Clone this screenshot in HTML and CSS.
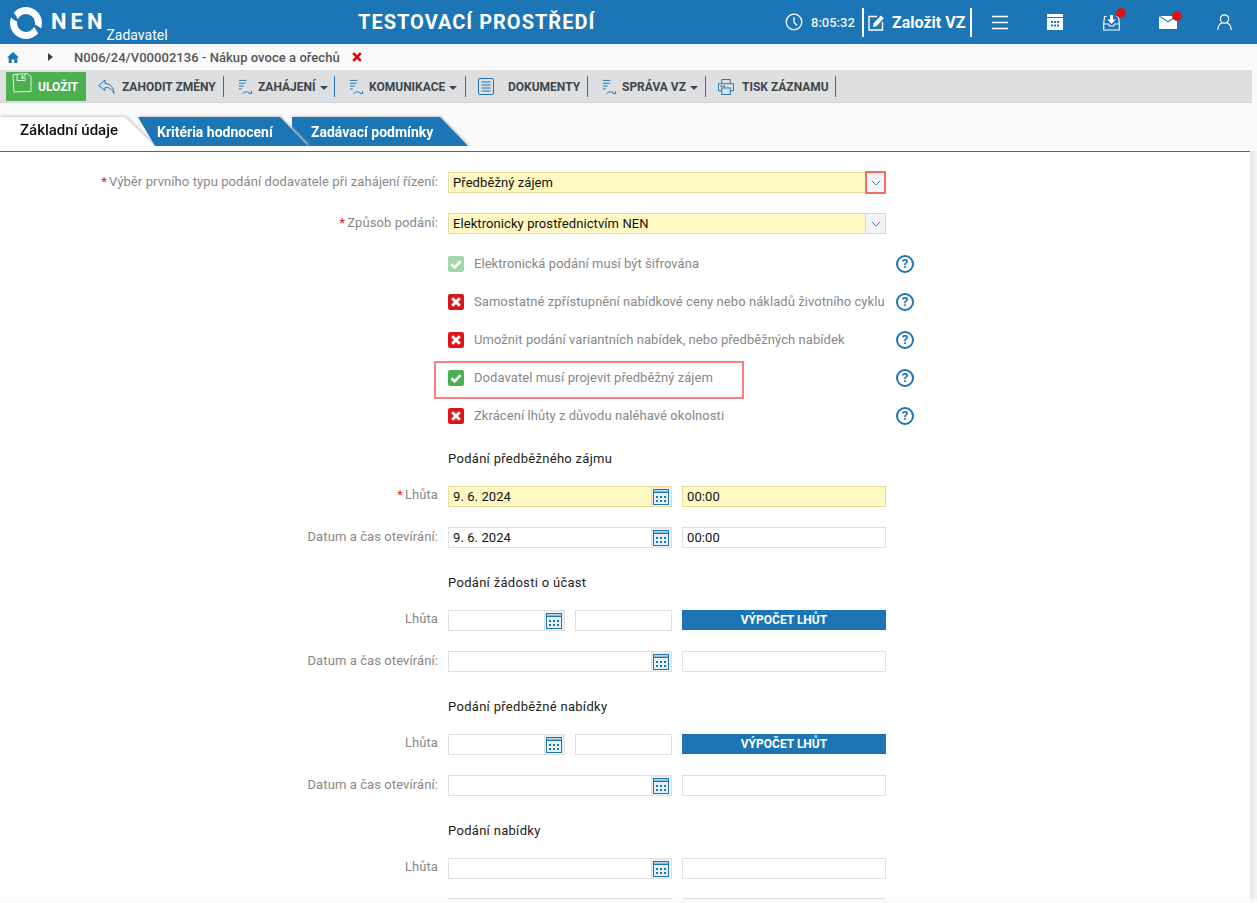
FILE: index.html
```html
<!DOCTYPE html>
<html lang="cs">
<head>
<meta charset="utf-8">
<title>NEN Zadavatel</title>
<link rel="stylesheet" href="styles.css">
</head>
<body>
<svg class="defs" width="0" height="0" aria-hidden="true">
  <defs>
    <symbol id="cal" viewBox="0 0 16 16">
      <rect x="0.5" y="0.5" width="15" height="15" fill="#e6f0f8" stroke="#1c75b5"/>
      <rect x="0" y="0" width="16" height="4" fill="#1c75b5"/>
      <rect x="1" y="1.3" width="14" height="1.2" fill="#fff"/>
      <g fill="#1c75b5">
        <rect x="3" y="7" width="2" height="2"/><rect x="7" y="7" width="2" height="2"/><rect x="11" y="7" width="2" height="2"/>
        <rect x="3" y="11" width="2" height="2"/><rect x="7" y="11" width="2" height="2"/><rect x="11" y="11" width="2" height="2"/>
      </g>
    </symbol>
    <symbol id="chev" viewBox="0 0 10 6">
      <path d="M0.7 0.7 L5 5 L9.3 0.7" fill="none" stroke="#3d8bc4" stroke-width="1"/>
    </symbol>
    <symbol id="lines" viewBox="0 0 16 18">
      <path d="M1 2.5H9M1 5.5H8M1 8.5H6M1 11.500H4" fill="none" stroke="#1c75b5" stroke-width="1"/>
      <path d="M5 17C6 14.500 10 14 12.500 15.800M14.500 13.800V16.500H11.500" fill="none" stroke="#1c75b5" stroke-width="1"/>
    </symbol>
    <symbol id="ok" viewBox="0 0 16 16">
      <path d="M3.4 8.3L6.6 11.4L12.6 5.2" fill="none" stroke="#fff" stroke-width="2.6"/>
    </symbol>
    <symbol id="no" viewBox="0 0 16 16">
      <path d="M4.2 4.2L11.8 11.8M11.8 4.2L4.2 11.8" fill="none" stroke="#fff" stroke-width="3"/>
    </symbol>
  </defs>
</svg>

<header class="top">
  <div class="brand">
    <svg class="logo" viewBox="0 0 32 32" width="32" height="32">
      <path d="M3.740 5.700A16 16 0 0 1 31 21.500Q28 18.500 24.860 17.560A9 9 0 0 0 7.840 12.200Q6 8.500 3.740 5.700Z" fill="#fff"/>
      <path d="M3.740 5.700A16 16 0 0 1 31 21.500Q28 18.500 24.860 17.560A9 9 0 0 0 7.840 12.200Q6 8.500 3.740 5.700Z" fill="#fff" transform="rotate(180 16 16)"/>
    </svg>
    <span class="nen">NEN</span>
    <span class="role">Zadavatel</span>
  </div>
  <div class="title">TESTOVACÍ PROSTŘEDÍ</div>
  <div class="status">
    <svg class="i-clock" viewBox="0 0 18 18" width="18" height="18"><circle cx="9" cy="9" r="7.8" fill="none" stroke="#fff" stroke-width="1.3"/><path d="M9 4V9.300L12 12.500" fill="none" stroke="#fff" stroke-width="1.3"/></svg>
    <span class="clock">8:05:32</span>
    <div class="create">
      <svg viewBox="0 0 17 17" width="17" height="17"><path d="M9 2.500H1V16H14.500V8" fill="none" stroke="#fff" stroke-width="1.400"/><path d="M5.500 9.500L12.800 1.500L15.800 4.300L8.500 12.300L5 13Z" fill="#fff"/></svg>
      <span>Založit VZ</span>
    </div>
    <div class="tool t-menu">
      <svg viewBox="0 0 16 15" width="16" height="15"><path d="M0 1.500H16M0 7.500H16M0 13.500H16" stroke="#fff" stroke-width="1.500"/></svg>
    </div>
    <div class="tool t-cal">
      <svg viewBox="0 0 16 16" width="16" height="16"><path d="M0 0H16V16H0Z" fill="#fff"/><rect x="0" y="3" width="16" height="1" fill="#1c75b5"/><g fill="#1c75b5"><rect x="4" y="7" width="2" height="2"/><rect x="7" y="7" width="2" height="2"/><rect x="10" y="7" width="2" height="2"/><rect x="4" y="10.500" width="2" height="2"/><rect x="7" y="10.500" width="2" height="2"/><rect x="10" y="10.500" width="2" height="2"/></g></svg>
    </div>
    <div class="tool t-inbox">
      <svg viewBox="0 0 17 17" width="17" height="17"><path d="M3.500 2.500H1.500L0.700 10V16H16.300V10L15.500 2.500H13.500" fill="none" stroke="#fff" stroke-width="1.100"/><path d="M0.700 10H5.500L6.500 12H10.500L11.500 10H16.300" fill="none" stroke="#fff" stroke-width="1.100"/><path d="M7 1H10V5.500H12.500L8.500 10L4.500 5.500H7Z" fill="#fff"/></svg>
      <i class="dot"></i>
    </div>
    <div class="tool t-mail">
      <svg viewBox="0 0 18 13" width="18" height="13"><path d="M0 0.500L9 6.500L18 0.500V13H0Z" fill="#fff"/><path d="M1 0H17L9 5.200Z" fill="#fff"/></svg>
      <i class="dot"></i>
    </div>
    <div class="tool t-user">
      <svg viewBox="0 0 15 16" width="15" height="16"><circle cx="7.500" cy="5" r="4.200" fill="none" stroke="#fff" stroke-width="1.200"/><path d="M0.800 16C0.800 11.500 3.500 9.500 5 9M14.200 16C14.200 11.500 11.500 9.500 10 9" fill="none" stroke="#fff" stroke-width="1.200"/></svg>
    </div>
  </div>
</header>

<nav class="crumbs">
  <svg class="home" viewBox="0 0 12 11" width="12" height="11"><path d="M6 0L12 5.600H10.300V11H7.300V7.500H4.700V11H1.700V5.600H0Z" fill="#1c75b5"/></svg>
  <i class="crumb-arrow"></i>
  <span class="crumb-text">N006/24/V00002136 - Nákup ovoce a ořechů</span>
  <svg class="crumb-x" viewBox="0 0 10 10" width="10" height="10"><path d="M1.200 1.200L8.800 8.800M8.800 1.200L1.200 8.800" stroke="#e00000" stroke-width="2.600"/></svg>
</nav>

<div class="toolbar">
  <button class="save" type="button">
    <svg viewBox="0 0 20 20" width="20" height="20"><path d="M1 1.500L15 0.500L19 3.500V18.500L2 19Z" fill="none" stroke="#dff0df" stroke-width="1"/><path d="M5 1.500V7.500H13V1.200" fill="none" stroke="#dff0df" stroke-width="1"/><rect x="9.500" y="2.500" width="2" height="3.500" fill="#dff0df"/></svg>
    <span>ULOŽIT</span>
  </button>
  <div class="tb tb-back">
    <svg viewBox="0 0 17 15" width="17" height="15"><path d="M7 1L0.800 6.500L7 11.500V8.500C11 8 14 10 16 14.500C16 9 12.500 4.500 7 4.500Z" fill="none" stroke="#1c75b5" stroke-width="1"/></svg>
    <span>ZAHODIT ZMĚNY</span>
  </div>
  <div class="tb tb-start">
    <svg viewBox="0 0 16 18" width="15" height="17"><use href="#lines"/></svg>
    <span>ZAHÁJENÍ</span><i class="caret"></i>
  </div>
  <div class="tb tb-comm">
    <svg viewBox="0 0 16 18" width="15" height="17"><use href="#lines"/></svg>
    <span>KOMUNIKACE</span><i class="caret"></i>
  </div>
  <div class="tb tb-docs">
    <svg viewBox="0 0 16 17" width="16" height="17"><rect x="0.500" y="0.500" width="15" height="16" rx="1.500" fill="none" stroke="#1c75b5"/><path d="M3.500 4H12.500M3.500 7H12.500M3.500 10H12.500M3.500 13H12.500" stroke="#1c75b5"/></svg>
    <span>DOKUMENTY</span>
  </div>
  <div class="tb tb-admin">
    <svg viewBox="0 0 16 18" width="15" height="17"><use href="#lines"/></svg>
    <span>SPRÁVA VZ</span><i class="caret"></i>
  </div>
  <div class="tb tb-print">
    <svg viewBox="0 0 17 17" width="16" height="16"><path d="M4 5V0.500H13V5M4 12.500H0.500V5H16.500V12.500H13" fill="none" stroke="#1c75b5"/><rect x="4" y="9.500" width="9" height="7" fill="none" stroke="#1c75b5"/><rect x="2.500" y="7" width="2" height="1.500" fill="#1c75b5"/><rect x="5.500" y="7" width="2" height="1.500" fill="#1c75b5"/></svg>
    <span>TISK ZÁZNAMU</span>
  </div>
</div>

<div class="tabs">
  <div class="tab-wrap w1"><div class="tab tab-on">Základní údaje</div></div>
  <div class="tab-wrap w2"><div class="tab tab-b">Kritéria hodnocení</div></div>
  <div class="tab-wrap w3"><div class="tab tab-c">Zadávací podmínky</div></div>
</div>

<main class="main">
  <form class="form">
    <div class="row">
      <label class="lbl"><b>*</b>Výběr prvního typu podání dodavatele při zahájení řízení:</label>
      <div class="select req"><span>Předběžný zájem</span><i class="sel-btn"><svg width="10" height="6"><use href="#chev"/></svg></i><i class="mark-btn"></i></div>
    </div>
    <div class="row">
      <label class="lbl"><b>*</b>Způsob podání:</label>
      <div class="select req"><span>Elektronicky prostřednictvím NEN</span><i class="sel-btn"><svg width="10" height="6"><use href="#chev"/></svg></i></div>
    </div>

    <div class="checks">
      <div class="chk"><i class="box on dim"><svg width="16" height="16"><use href="#ok"/></svg></i><span class="chk-text">Elektronická podání musí být šifrována</span><i class="help">?</i></div>
      <div class="chk"><i class="box off"><svg width="16" height="16"><use href="#no"/></svg></i><span class="chk-text">Samostatné zpřístupnění nabídkové ceny nebo nákladů životního cyklu</span><i class="help">?</i></div>
      <div class="chk"><i class="box off"><svg width="16" height="16"><use href="#no"/></svg></i><span class="chk-text">Umožnit podání variantních nabídek, nebo předběžných nabídek</span><i class="help">?</i></div>
      <div class="chk"><i class="box on"><svg width="16" height="16"><use href="#ok"/></svg></i><span class="chk-text">Dodavatel musí projevit předběžný zájem</span><i class="help">?</i><i class="mark-row"></i></div>
      <div class="chk"><i class="box off"><svg width="16" height="16"><use href="#no"/></svg></i><span class="chk-text">Zkrácení lhůty z důvodu naléhavé okolnosti</span><i class="help">?</i></div>
    </div>

    <h3 class="sec">Podání předběžného zájmu</h3>
    <div class="row">
      <label class="lbl lbl-up"><b>*</b>Lhůta</label>
      <div class="date req"><span>9. 6. 2024</span><i class="cal-btn"><svg width="16" height="16"><use href="#cal"/></svg></i></div>
      <div class="inp hm req">00:00</div>
    </div>
    <div class="row">
      <label class="lbl">Datum a čas otevírání:</label>
      <div class="date"><span>9. 6. 2024</span><i class="cal-btn"><svg width="16" height="16"><use href="#cal"/></svg></i></div>
      <div class="inp hm">00:00</div>
    </div>

    <h3 class="sec">Podání žádosti o účast</h3>
    <div class="row">
      <label class="lbl lbl-up">Lhůta</label>
      <div class="date short"><span></span><i class="cal-btn"><svg width="16" height="16"><use href="#cal"/></svg></i></div>
      <div class="inp hm-short"></div>
      <button class="calc" type="button">VÝPOČET LHŮT</button>
    </div>
    <div class="row">
      <label class="lbl">Datum a čas otevírání:</label>
      <div class="date"><span></span><i class="cal-btn"><svg width="16" height="16"><use href="#cal"/></svg></i></div>
      <div class="inp hm"></div>
    </div>

    <h3 class="sec">Podání předběžné nabídky</h3>
    <div class="row">
      <label class="lbl lbl-up">Lhůta</label>
      <div class="date short"><span></span><i class="cal-btn"><svg width="16" height="16"><use href="#cal"/></svg></i></div>
      <div class="inp hm-short"></div>
      <button class="calc" type="button">VÝPOČET LHŮT</button>
    </div>
    <div class="row">
      <label class="lbl">Datum a čas otevírání:</label>
      <div class="date"><span></span><i class="cal-btn"><svg width="16" height="16"><use href="#cal"/></svg></i></div>
      <div class="inp hm"></div>
    </div>

    <h3 class="sec">Podání nabídky</h3>
    <div class="row">
      <label class="lbl lbl-up">Lhůta</label>
      <div class="date"><span></span><i class="cal-btn"><svg width="16" height="16"><use href="#cal"/></svg></i></div>
      <div class="inp hm"></div>
    </div>
    <div class="row row-cut">
      <label class="lbl"></label>
      <div class="date"><span></span><i class="cal-btn"></i></div>
      <div class="inp hm"></div>
    </div>
  </form>
  <div class="scroll"></div>
</main>
</body>
</html>
```

FILE: styles.css
```css
* { box-sizing: border-box; }
html, body { margin: 0; padding: 0; }
body {
  width: 1257px;
  height: 903px;
  overflow: hidden;
  background: #fafafa;
  font-family: Roboto, "Liberation Sans", sans-serif;
  color: #111;
}
i { font-style: normal; display: block; }
.defs { position: absolute; }

/* Header */
.top {
  height: 44px;
  background: #1c75b5;
  color: #fff;
  display: flex;
  align-items: center;
}
.brand {
  width: 358px;
  height: 44px;
  flex: none;
  display: flex;
  padding-left: 10px;
  align-items: flex-start;
}
.logo { margin-top: 7px; flex: none; }
.nen {
  font-size: 22px;
  font-weight: 700;
  letter-spacing: 4px;
  margin-left: 9px;
  line-height: 44px;
}
.role { font-size: 14px; margin-left: 0; margin-top: 27px; line-height: 16px; }
.title {
  width: 427px;
  flex: none;
  font-size: 20px;
  font-weight: 700;
  letter-spacing: 1px;
}
.status { flex: none; display: flex; align-items: center; height: 44px; }
.i-clock { flex: none; }
.clock { margin-left: 8px; font-size: 13px; font-weight: 500; width: 51px; color: #eef4f9; }
.create {
  width: 110px;
  height: 29px;
  flex: none;
  border-left: 2px solid #fff;
  border-right: 2px solid #fff;
  display: flex;
  align-items: center;
  padding-left: 4px;
  font-size: 16px;
  font-weight: 700;
  white-space: nowrap;
}
.create span { margin-left: 7px; }
.tool { position: relative; flex: none; display: flex; }
.t-menu { margin-left: 20px; }
.t-cal { margin-left: 39px; }
.t-inbox { margin-left: 40px; }
.t-mail { margin-left: 39px; }
.t-user { margin-left: 40px; }
.dot {
  position: absolute;
  width: 10px;
  height: 10px;
  border-radius: 50%;
  background: #d7141a;
  right: -5px;
  top: -5px;
}
.t-inbox .dot { right: -6px; top: -6px; }
.t-mail .dot { right: -5px; top: -5px; }

/* Breadcrumb */
.crumbs { height: 26px; display: flex; align-items: center; padding-left: 7px; }
.crumb-arrow {
  margin-left: 29px;
  width: 0; height: 0;
  border-left: 5px solid #3b3f44;
  border-top: 4px solid transparent;
  border-bottom: 4px solid transparent;
}
.crumb-text { margin-left: 21px; font-size: 13px; font-weight: 500; color: #555; letter-spacing: 0.05px; }
.crumb-x { margin-left: 12px; }

/* Toolbar */
.toolbar {
  width: 1252px;
  height: 33px;
  background: #dddfe1;
  border-bottom: 1px solid #d2d4d6;
  padding: 2px 0 0 6px;
  display: flex;
  align-items: flex-start;
  font-size: 12px;
  font-weight: 700;
  color: #40454b;
}
.save {
  width: 80px;
  height: 29px;
  border: 0;
  background: #4caf50;
  color: #fff;
  font: inherit;
  display: flex;
  align-items: center;
  padding: 0 0 0 6px;
}
.save svg { margin-top: -7px; flex: none; }
.save span { margin-left: 6px; }
.tb {
  height: 21px;
  margin-top: 4px;
  display: flex;
  align-items: center;
  white-space: nowrap;
  border-right: 1px solid #1c75b5;
}
.tb span { display: block; }
.tb svg { flex: none; }
.caret {
  margin-left: 4px;
  width: 0; height: 0;
  border-top: 4px solid #40454b;
  border-left: 4px solid transparent;
  border-right: 4px solid transparent;
  margin-top: 2px;
}
.tb-back { margin-left: 12px; width: 126px; }
.tb-back span { margin-left: 7px; }
.tb-start { margin-left: 14px; width: 97px; }
.tb-start span { margin-left: 5px; }
.tb-comm { margin-left: 14px; width: 117px; }
.tb-comm span { margin-left: 5px; }
.tb-docs { margin-left: 12px; width: 110px; }
.tb-docs span { margin-left: 14px; }
.tb-admin { margin-left: 14px; width: 104px; }
.tb-admin span { margin-left: 5px; }
.tb-print { margin-left: 12px; width: 118px; }
.tb-print span { margin-left: 8px; }

/* Tabs */
.tabs { margin-top: 14px; height: 29px; display: flex; width: 1250px; }
.tab-wrap { filter: drop-shadow(1px -1px 1px #c8c8c8); flex: none; }
.tab {
  height: 29px;
  font-size: 14px;
  font-weight: 700;
  color: #fff;
  line-height: 31px;
  white-space: nowrap;
}
.tab-on {
  width: 155px;
  background: #fff;
  color: #111;
  font-size: 15px;
  font-weight: 500;
  line-height: 27px;
  padding-left: 20px;
  clip-path: polygon(0 0, 125px 0, 155px 29px, 0 29px);
}
.tab-b {
  background: #1c75b5;
  width: 170px;
  padding-left: 19px;
  clip-path: polygon(0 0, 142px 0, 170px 29px, 17px 29px);
}
.tab-c {
  background: #1c75b5;
  width: 176px;
  padding-left: 19px;
  clip-path: polygon(0 0, 148px 0, 176px 29px, 16px 29px, 0 12px);
}
.w1 { z-index: 1; }
.w2 { margin-left: -17px; z-index: 3; }
.w3 { margin-left: -16px; z-index: 2; }

/* Main */
.main { display: flex; height: 753px; }
.form {
  width: 1250px;
  height: 753px;
  overflow: hidden;
  background: #fff;
  padding-top: 16px;
  background-image: linear-gradient(#1c75b5, #1c75b5);
  background-size: 100% 1px;
  background-position: 0 5px;
  background-repeat: no-repeat;
}
.scroll { width: 7px; margin-top: 5px; background: linear-gradient(90deg, #e6e6e6, #f3f3f3); }

.row { height: 41px; display: flex; align-items: center; }
.row-cut { margin-top: -1px; }
.lbl {
  width: 438px;
  flex: none;
  text-align: right;
  font-size: 13px;
  color: #888;
  letter-spacing: 0.09px;
  margin-right: 10px;
  margin-top: -3px;
  height: 15px;
  line-height: 15px;
}
.lbl-up { margin-top: -5px; }
.lbl b { color: #e02020; font-weight: 400; margin-right: 2px; }
.select, .date, .inp {
  height: 21px;
  border: 1px solid #e0e0e0;
  font-size: 13px;
  letter-spacing: 0.08px;
  line-height: 19px;
  color: #111;
  flex: none;
  background: #fff;
}
.req { background: #fff8c2; border-color: #e8dc9c; }
.select {
  width: 438px;
  display: flex;
  justify-content: space-between;
  position: relative;
  padding-left: 4px;
}
.sel-btn {
  width: 20px;
  background: #f3f4f5;
  border-left: 1px solid #e8dc9c;
  display: flex;
  align-items: center;
  justify-content: center;
}
.mark-btn {
  position: absolute;
  right: -1px;
  top: -2px;
  width: 21px;
  height: 23px;
  border: 2px solid #f26a6a;
  border-radius: 1px;
}
.date {
  width: 224px;
  display: flex;
  justify-content: space-between;
  padding-left: 4px;
}
.date.short { width: 117px; }
.cal-btn {
  width: 20px;
  background: #eeeff0;
  border-left: 1px solid #e0e0e0;
  display: flex;
  align-items: center;
  padding-left: 1px;
}
.req .cal-btn { border-color: #e8dc9c; }
.hm { width: 204px; margin-left: 10px; padding-left: 4px; }
.hm-short { width: 97px; margin-left: 10px; }
.calc {
  width: 204px;
  height: 20px;
  margin: 0 0 1px 10px;
  border: 0;
  padding: 0;
  background: #1c75b5;
  color: #fff;
  font: 700 12px Roboto, sans-serif;
}

.checks { margin-top: 1px; margin-bottom: -1px; }
.chk { height: 38px; display: flex; align-items: center; padding-left: 448px; position: relative; }
.box {
  width: 16px;
  height: 16px;
  border-radius: 2px;
  flex: none;
}
.box svg { display: block; }
.on { background: #4caf50; }
.dim { background: #a5d6a7; }
.off { background: #d9161c; }
.chk-text {
  margin-left: 10px;
  width: 422px;
  font-size: 13px;
  color: #888;
  letter-spacing: 0.06px;
  white-space: nowrap;
  margin-top: -1px;
}
.help {
  width: 18px;
  height: 18px;
  border: 2px solid #1c75b5;
  border-radius: 50%;
  font-size: 13px;
  font-weight: 700;
  line-height: 14px;
  text-align: center;
  color: #1c75b5;
  flex: none;
}
.mark-row {
  position: absolute;
  left: 434px;
  top: 2px;
  width: 310px;
  height: 38px;
  border: 2px solid #f98080;
}
.sec {
  margin: 0;
  height: 42px;
  padding: 7px 0 0 448px;
  font-size: 13px;
  font-weight: 400;
  letter-spacing: 0.3px;
  line-height: 36px;
  color: #222;
}
```
